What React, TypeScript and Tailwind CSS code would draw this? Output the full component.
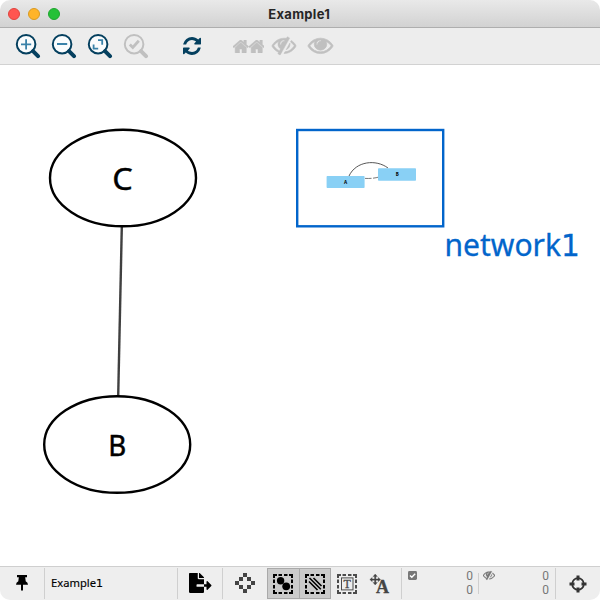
import React from "react";
import { FaFileExport } from "react-icons/fa";

const EYE =
  "M1664 960q-152-236-381-353 61 104 61 225 0 185-131.5 316.5t-316.5 131.5-316.5-131.5-131.5-316.5q0-121 61-225-229 117-381 353 133 205 333.5 326.5t434.5 121.5 434.5-121.5 333.5-326.5zm-720-384q0-20-14-34t-34-14q-125 0-214.5 89.5t-89.5 214.5q0 20 14 34t34 14 34-14 14-34q0-86 61-147t147-61q20 0 34-14t14-34zm848 384q0 34-20 69-140 230-376.5 368.5t-499.5 138.5-499.5-139-376.5-368q-20-35-20-69t20-69q140-229 376.5-368t499.5-139 499.5 139 376.5 368q20 35 20 69z";
const EYE_OFF =
  "M555 1335l78-141q-87-63-136-159t-49-203q0-121 61-225-229 117-381 353 167 258 427 375zm389-759q0-20-14-34t-34-14q-125 0-214.5 89.5t-89.5 214.5q0 20 14 34t34 14 34-14 14-34q0-86 61-147t147-61q20 0 34-14t14-34zm363-191q0 7-1 9-106 189-316 567t-315 566l-49 89q-10 16-28 16-12 0-134-70-16-10-16-28 0-12 44-87-143-65-263.5-173t-208.5-245q-20-31-20-69t20-69q153-235 380-371t496-136q89 0 180 17l54-97q10-16 28-16 5 0 18 6t31 15.5 33 18.5 31.5 18.5 19.5 11.5q16 10 16 27zm37 447q0 139-79 253.5t-209 164.5l280-502q8 45 8 84zm448 128q0 35-20 69-39 64-109 145-150 172-347.5 267t-419.5 95l74-132q212-18 392.5-137t301.5-307q-115-179-282-294l63-112q95 64 182.5 153t144.5 184q20 34 20 69z";
const HOME =
  "M1472 992v480q0 26-19 45t-45 19h-384v-384h-256v384h-384q-26 0-45-19t-19-45v-480q0-1 .5-3t.5-3l575-474 575 474q1 2 1 6zm223-69l-62 74q-8 9-21 11h-3q-13 0-21-7l-692-577-692 577q-12 8-24 7-13-2-21-11l-62-74q-8-10-7-23.5t11-21.5l719-599q32-26 76-26t76 26l244 204v-195q0-14 9-23t23-9h192q14 0 23 9t9 23v408l219 182q10 8 11 21.5t-7 23.5z";
const REFRESH =
  "M1511 1056q0 5-1 7-64 268-268 434.5t-478 166.5q-146 0-282.5-55t-243.5-157l-129 129q-19 19-45 19t-45-19-19-45v-448q0-26 19-45t45-19h448q26 0 45 19t19 45-19 45l-137 137q71 66 161 102t187 36q134 0 250-65t186-179q11-17 53-117 8-23 30-23h192q13 0 22.5 9.5t9.5 22.5zm25-800v448q0 26-19 45t-45 19h-448q-26 0-45-19t-19-45 19-45l138-138q-148-137-349-137-134 0-250 65t-186 179q-11 17-53 117-8 23-30 23h-199q-13 0-22.5-9.5t-9.5-22.5v-7q65-268 270-434.5t480-166.5q146 0 284 55.5t245 156.5l130-129q19-19 45-19t45 19 19 45z";

function Magnifier({ color = "#05405f", fill = "#fafcfd", children }: { color?: string; fill?: string; children: React.ReactNode }) {
  return (
    <svg width="26" height="26" viewBox="0 0 26 26" fill="none" className="mr-2.5 shrink-0">
      <circle cx="11.1" cy="11.2" r="9.3" fill={fill} stroke={color} strokeWidth="2" />
      <path d="M18 18.2L23 23.2" stroke={color} strokeWidth="4" strokeLinecap="round" />
      {children}
    </svg>
  );
}

function TitleBar() {
  return (
    <header className="grid h-7 shrink-0 grid-cols-[1fr_auto_1fr] items-center border-b border-[#aeaeae] bg-linear-to-b from-[#e9e9e9] to-[#d2d2d2]">
      <div className="flex gap-2 pl-2">
        <span className="size-3 rounded-full border border-[#e0443e] bg-[#ff5550]" />
        <span className="size-3 rounded-full border border-[#d99a22] bg-[#ffb429]" />
        <span className="size-3 rounded-full border border-[#1fa62f] bg-[#25c138]" />
      </div>
      <h1 className="mr-[1.5px] font-['Inter',sans-serif] text-[13px] leading-4 font-bold tracking-[0.3px] text-[#262626]">Example1</h1>
    </header>
  );
}

function ToolBar() {
  return (
    <div className="flex h-[37px] shrink-0 items-start border-b border-[#d2d2d2] bg-[#ededed] pt-[5px] pl-[15px]">
      <Magnifier>
        <path d="M11.1 6.2v10.2M6 11.3h10.2" stroke="#3a82a9" strokeWidth="1.8" />
      </Magnifier>
      <Magnifier>
        <path d="M6 11h10.2" stroke="#3a82a9" strokeWidth="1.8" />
      </Magnifier>
      <Magnifier>
        <path d="M11 7.2h4.2v4.5M6.6 11.5v4.2h4.6" stroke="#3a82a9" strokeWidth="1.8" />
      </Magnifier>
      <Magnifier color="#c0c0c0" fill="#ededed">
        <path d="M6.8 11.5l3 3 6-6.7" stroke="#c0c0c0" strokeWidth="2.8" />
      </Magnifier>
      <svg width="18" height="18" viewBox="0 128 1536 1536" className="mt-1 ml-6 shrink-0" fill="#05405f">
        <path d={REFRESH} />
      </svg>
      <div className="mt-[7px] ml-8 flex">
        <svg width="15.5" height="13" viewBox="96 256 1600 1280" preserveAspectRatio="none" fill="#c0c0c0" stroke="#c0c0c0" strokeWidth="50">
          <path d={HOME} />
        </svg>
        <svg width="15.5" height="13" viewBox="96 256 1600 1280" preserveAspectRatio="none" fill="#c0c0c0" stroke="#c0c0c0" strokeWidth="50">
          <path d={HOME} />
        </svg>
      </div>
      <svg width="24" height="24" viewBox="0 0 1792 1792" className="ml-2 shrink-0 overflow-visible" fill="#c0c0c0" stroke="#c0c0c0" strokeWidth="40">
        <path d={EYE_OFF} />
      </svg>
      <svg width="25" height="24" viewBox="0 0 1792 1792" preserveAspectRatio="none" className="ml-3 shrink-0 overflow-visible" fill="#c0c0c0" stroke="#c0c0c0" strokeWidth="50">
        <path d={EYE} />
      </svg>
    </div>
  );
}

function NetworkCanvas() {
  return (
    <svg width="600" height="501" viewBox="0 65 600 501" className="shrink-0 bg-white font-['Noto_Sans',sans-serif]">
      <path d="M121.8 227L118.2 396" stroke="#404040" strokeWidth="2.4" />
      <ellipse cx="123" cy="178" rx="73" ry="48.3" fill="#fff" stroke="#000" strokeWidth="2.4" />
      <text x="112.2" y="190" fontSize="31" stroke="#000" strokeWidth="0.4" textLength="20.5" lengthAdjust="spacingAndGlyphs">C</text>
      <ellipse cx="117.2" cy="444.5" rx="73" ry="48.3" fill="#fff" stroke="#000" strokeWidth="2.4" />
      <text x="108.3" y="456" fontSize="29.5" stroke="#000" strokeWidth="0.5" textLength="18" lengthAdjust="spacingAndGlyphs">B</text>
      <rect x="297.2" y="130" width="146" height="96.3" fill="#fff" stroke="#0265cb" strokeWidth="2.4" />
      <path d="M349 176C356 161 376 159 388 168" fill="none" stroke="#444" strokeWidth="0.9" />
      <path d="M365 178.4Q373 178.8 379 177" fill="none" stroke="#555" strokeWidth="0.8" strokeDasharray="6.5 1.5" />
      <rect x="326.6" y="176" width="38" height="12" rx="0.8" fill="#89d0f5" />
      <rect x="378" y="168.3" width="38" height="12.5" rx="0.8" fill="#89d0f5" />
      <text x="345.6" y="183.6" fontSize="4.6" fontWeight="bold" textAnchor="middle">A</text>
      <text x="397.4" y="176.2" fontSize="4.6" fontWeight="bold" textAnchor="middle">B</text>
      <text x="444.4" y="256" fontSize="30" fill="#0265cb" stroke="#0265cb" strokeWidth="0.3" textLength="135.5" lengthAdjust="spacingAndGlyphs">
        network<tspan className="font-['DejaVu_Sans',sans-serif]" fontSize="29.5">1</tspan>
      </text>
    </svg>
  );
}

function DashedFrame({ color, children }: { color: string; children: React.ReactNode }) {
  return (
    <svg width="20" height="20" viewBox="0 0 20 20" fill="none">
      <path
        d="M0 1h4M5.5 1h3.5M11 1h3.5M16 1h4M0 19h4M5.5 19h3.5M11 19h3.5M16 19h4M1 0v4M1 5.5v3.5M1 11v3.5M1 16v4M19 0v4M19 5.5v3.5M19 11v3.5M19 16v4"
        stroke={color}
        strokeWidth="2"
      />
      {children}
    </svg>
  );
}

function Count({ values }: { values: number[] }) {
  return (
    <div className="flex flex-col text-right font-['Roboto',sans-serif] text-[12px] leading-[14px] text-[#777]">
      {values.map((v, i) => (
        <span key={i}>{v}</span>
      ))}
    </div>
  );
}

function StatusBar() {
  return (
    <footer className="flex h-[34px] shrink-0 items-stretch border-t border-[#cfcfcf] bg-[#eeeeee] pt-px pb-px">
      <div className="w-[45px] shrink-0 border-r border-[#cfcfcf] pt-[7px] pl-4">
        <svg width="12" height="16" viewBox="0 0 12 16">
          <path d="M1 0h10v2.2H9.2L9.7 6.3Q12 7.5 12 9.7H7V15l-1 1-1-1V9.7H0Q0 7.5 2.3 6.3L2.8 2.2H1z" />
        </svg>
      </div>
      <div className="w-[133px] shrink-0 border-r border-[#cfcfcf] pl-1.5">
        <svg width="60" height="31" className="font-['Noto_Sans',sans-serif]">
          <text x="0" y="19" fontSize="11.2" stroke="#000" strokeWidth="0.15" textLength="52" lengthAdjust="spacingAndGlyphs">
            Example<tspan className="font-['DejaVu_Sans',sans-serif]" fontSize="11">1</tspan>
          </text>
        </svg>
      </div>
      <div className="w-[45px] shrink-0 border-r border-[#cfcfcf] pt-[5px] pl-[11px]">
        <FaFileExport size={20} className="h-5 w-[22.5px]" />
      </div>
      <div className="w-11 shrink-0 pt-[5px] pl-3">
        <svg width="20" height="20" viewBox="0 0 20 20" fill="#444" shapeRendering="crispEdges">
          <path d="M8 0h4v4H8zM4 4h4v4H4zM12 4h4v4h-4zM0 8h4v4H0zM16 8h4v4h-4zM4 12h4v4H4zM12 12h4v4h-4zM8 16h4v4H8z" />
        </svg>
      </div>
      <div className="w-[33px] shrink-0 border border-[#a9a9a9] bg-[#cbcbcb] pt-[5px] pl-[5px]">
        <DashedFrame color="#000">
          <circle cx="7.6" cy="6.8" r="3.7" fill="#000" />
          <circle cx="13.2" cy="12.3" r="3.9" fill="#000" />
        </DashedFrame>
      </div>
      <div className="w-[31px] shrink-0 border border-l-0 border-[#a9a9a9] bg-[#cbcbcb] pt-[5px] pl-[5px]">
        <DashedFrame color="#000">
          <path d="M4 7.5L12.5 16M4.5 4L15.8 15.2M8.5 4L16.5 12" stroke="#000" strokeWidth="1.6" />
        </DashedFrame>
      </div>
      <div className="shrink-0 pt-1.5 pl-1.5">
        <DashedFrame color="#4b4b4b">
          <rect x="4.5" y="3.9" width="11.5" height="12" stroke="#4b4b4b" />
          <text x="10.2" y="14" fontSize="12" textAnchor="middle" fill="#4b4b4b" stroke="#4b4b4b" strokeWidth="0.3" className="font-['Liberation_Serif',serif]">T</text>
        </DashedFrame>
      </div>
      <svg width="21" height="22" viewBox="0 0 21 22" className="mt-[5px] ml-3 shrink-0" fill="#444">
        <path d="M6.2 1L8.4 3.6H6.9V5.9H9.2V4.4L11.6 6.5 9.2 8.7V7.2H6.9V9.5H8.4L6.2 12 4 9.5H5.5V7.2H3.2V8.7L.8 6.5 3.2 4.4V5.9H5.5V3.6H4z" stroke="#444" strokeWidth=".3" />
        <text x="7" y="20" fontSize="18" fontWeight="bold" className="font-['Liberation_Serif',serif]" textLength="13" lengthAdjust="spacingAndGlyphs" stroke="#444" strokeWidth="0.3">A</text>
      </svg>
      <div className="ml-[11px] flex w-[77px] shrink-0 border-l border-[#cfcfcf] pt-px pr-[5px] pl-1.5">
        <svg width="9" height="9" viewBox="0 0 9 9" className="mt-0.5">
          <rect width="9" height="9" rx="1.4" fill="#777" />
          <path d="M2 4.5l1.8 1.8L7.2 2.8" fill="none" stroke="#fff" strokeWidth="1.4" />
        </svg>
        <div className="ml-auto"><Count values={[0, 0]} /></div>
      </div>
      <div className="my-[5px] w-px shrink-0 bg-[#cfcfcf]" />
      <div className="flex w-[77px] shrink-0 border-r border-[#cfcfcf] pt-px pr-[6px] pl-1">
        <svg width="12" height="12" viewBox="0 0 1792 1792" fill="#777" stroke="#777" strokeWidth="30">
          <path d={EYE_OFF} />
        </svg>
        <div className="ml-auto"><Count values={[0, 0]} /></div>
      </div>
      <svg width="18" height="18" viewBox="0 0 18 18" className="mt-[7px] ml-[13px] shrink-0" fill="none" stroke="#333">
        <circle cx="9" cy="9" r="5.8" strokeWidth="1.8" />
        <path d="M9 .5v5M9 12.5v5M.5 9h5M12.5 9h5" strokeWidth="3" />
      </svg>
    </footer>
  );
}

export default function App() {
  return (
    <main className="flex h-[600px] w-[600px] flex-col overflow-hidden rounded-[10px] bg-white">
      <TitleBar />
      <ToolBar />
      <NetworkCanvas />
      <StatusBar />
    </main>
  );
}
